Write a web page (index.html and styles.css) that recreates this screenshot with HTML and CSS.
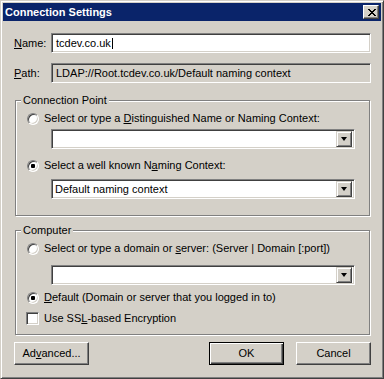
FILE: index.html
```html
<!DOCTYPE html>
<html lang="en">
<head>
    <meta charset="UTF-8">
    <meta name="viewport" content="width=device-width, initial-scale=1.0">
    <title>Connection Settings</title>
    <link rel="stylesheet" href="styles.css">
</head>
<body>
    <div class="window">
        <div class="titlebar">
            <span class="title">Connection Settings</span>
            <div class="close">
                <svg width="8" height="7" viewBox="0 0 8 7" shape-rendering="crispEdges">
                    <path d="M0 0h2v1h-2z M6 0h2v1h-2z M1 1h2v1h-2z M5 1h2v1h-2z M2 2h4v1h-4z M3 3h2v1h-2z M2 4h4v1h-4z M1 5h2v1h-2z M5 5h2v1h-2z M0 6h2v1h-2z M6 6h2v1h-2z" fill="#000"/>
                </svg>
            </div>
        </div>

        <div class="content">
            <div class="row">
                <label class="label"><u>N</u>ame:</label>
                <div class="field edit">tcdev.co.uk<span class="caret"></span></div>
            </div>
            <div class="row path-row">
                <label class="label"><u>P</u>ath:</label>
                <div class="field readonly">LDAP://Root.tcdev.co.uk/Default naming context</div>
            </div>

            <div class="group group-point">
                <div class="group-title">Connection Point</div>
                <div class="option opt-dn">
                    <span class="radio"></span>
                    <span>Select or type a <u>D</u>istinguished Name or Naming Context:</span>
                </div>
                <div class="combo combo-dn">
                    <span class="combo-text"></span>
                    <span class="combo-btn"><span class="arrow"></span></span>
                </div>
                <div class="option opt-known">
                    <span class="radio checked"></span>
                    <span>Select a well known N<u>a</u>ming Context:</span>
                </div>
                <div class="combo combo-known">
                    <span class="combo-text">Default naming context</span>
                    <span class="combo-btn"><span class="arrow"></span></span>
                </div>
            </div>

            <div class="group group-computer">
                <div class="group-title">Computer</div>
                <div class="option opt-server">
                    <span class="radio"></span>
                    <span>Select or type a domain or <u>s</u>erver: (Server | Domain [:port])</span>
                </div>
                <div class="combo combo-server">
                    <span class="combo-text"></span>
                    <span class="combo-btn"><span class="arrow"></span></span>
                </div>
                <div class="option opt-default">
                    <span class="radio checked"></span>
                    <span><u>D</u>efault (Domain or server that you logged in to)</span>
                </div>
                <div class="option opt-ssl">
                    <span class="checkbox"></span>
                    <span>Use SS<u>L</u>-based Encryption</span>
                </div>
            </div>

            <div class="buttons">
                <div class="btn">Ad<u>v</u>anced...</div>
                <div class="btn btn-default btn-ok">OK</div>
                <div class="btn">Cancel</div>
            </div>
        </div>
    </div>
</body>
</html>
```

FILE: styles.css
```css
* {
    margin: 0;
    padding: 0;
    box-sizing: border-box;
}

body {
    font-family: 'Liberation Sans', Arial, sans-serif;
    font-size: 11px;
    line-height: 13px;
    color: #000;
    background: #d4d0c8;
}

u {
    text-decoration: underline;
    text-underline-offset: 1px;
}

/* outer window frame */
.window {
    width: 384px;
    height: 379px;
    background: #d4d0c8;
    border: 1px solid;
    border-color: #d4d0c8 #404040 #404040 #d4d0c8;
    box-shadow: inset 1px 1px #fff, inset -1px -1px #808080;
    padding: 2px;
}

.titlebar {
    height: 18px;
    background: #0a246a;
    display: flex;
    align-items: center;
    justify-content: space-between;
    padding: 0 2px 0 2px;
}

.title {
    color: #fff;
    font-weight: bold;
}

.close {
    width: 16px;
    height: 14px;
    background: #d4d0c8;
    border: 1px solid;
    border-color: #fff #404040 #404040 #fff;
    box-shadow: inset -1px -1px #808080;
    display: flex;
    align-items: center;
    justify-content: center;
    padding-left: 1px;
}

.close svg {
    display: block;
}

.content {
    padding: 12px 10px 0 11px;
}

.row {
    display: flex;
    align-items: center;
    height: 20px;
}

.path-row {
    margin-top: 10px;
}

.label {
    width: 37px;
}

/* sunken 3d field */
.field {
    width: 320px;
    height: 20px;
    display: flex;
    align-items: center;
    padding-left: 4px;
    border: 1px solid;
    border-color: #808080 #fff #fff #808080;
    box-shadow: inset 1px 1px #404040, inset -1px -1px #d4d0c8;
    background: #fff;
    white-space: nowrap;
}

.field.readonly {
    background: #d4d0c8;
}

.caret {
    width: 1px;
    height: 11px;
    background: #000;
    margin-left: 1px;
}

/* etched group box */
.group {
    margin: 0 1px;
    border: 1px solid #808080;
    box-shadow: inset 1px 1px #fff, 1px 1px #fff;
    padding-left: 10px;
}

.group-point {
    margin-top: 17px;
    padding-bottom: 16px;
}

.group-computer {
    margin-top: 14px;
    padding-bottom: 9px;
}

.group-title {
    width: fit-content;
    margin: -7px 0 0 -5px;
    padding: 0 2px;
    background: #d4d0c8;
}

.option {
    display: flex;
    align-items: center;
    height: 13px;
    margin-top: 5px;
}

.opt-known {
    margin-top: 10px;
}

.opt-default {
    margin-top: 6px;
}

.opt-ssl {
    margin-top: 8px;
}

.radio {
    position: relative;
    flex: none;
    width: 12px;
    height: 12px;
    margin: 0 5px 0 1px;
    border-radius: 50%;
    border: 1px solid;
    border-color: #808080 #fff #fff #808080;
    box-shadow: inset 1px 1px #404040, inset -1px -1px #d4d0c8;
    background: #fff;
}

.radio.checked::after {
    content: "";
    position: absolute;
    left: 3px;
    top: 3px;
    width: 4px;
    height: 4px;
    border-radius: 1px;
    background: #000;
}

.checkbox {
    flex: none;
    width: 13px;
    height: 13px;
    margin-right: 5px;
    border: 1px solid;
    border-color: #808080 #fff #fff #808080;
    box-shadow: inset 1px 1px #404040, inset -1px -1px #d4d0c8;
    background: #fff;
}

.combo {
    width: 304px;
    height: 20px;
    margin-left: 25px;
    display: flex;
    align-items: center;
    justify-content: space-between;
    padding: 2px 2px 2px 3px;
    border: 1px solid;
    border-color: #808080 #fff #fff #808080;
    box-shadow: inset 1px 1px #404040, inset -1px -1px #d4d0c8;
    background: #fff;
}

.combo-dn {
    margin-top: 4px;
}

.combo-known {
    margin-top: 7px;
}

.combo-server {
    margin-top: 10px;
}

.combo-btn {
    width: 16px;
    height: 16px;
    background: #d4d0c8;
    border: 1px solid;
    border-color: #d4d0c8 #404040 #404040 #d4d0c8;
    box-shadow: inset 1px 1px #fff, inset -1px -1px #808080;
    display: flex;
    align-items: center;
    justify-content: center;
}

.arrow {
    width: 0;
    height: 0;
    border-left: 3.5px solid transparent;
    border-right: 3.5px solid transparent;
    border-top: 4px solid #000;
}

.buttons {
    display: flex;
    margin-top: 7px;
}

.btn {
    width: 75px;
    height: 23px;
    display: flex;
    align-items: center;
    justify-content: center;
    border: 1px solid;
    border-color: #fff #404040 #404040 #fff;
    box-shadow: inset -1px -1px #808080;
    background: #d4d0c8;
}

.btn-default {
    border-color: #000;
    box-shadow: inset 1px 1px #fff, inset -1px -1px #404040, inset -2px -2px #808080;
}

.btn-ok {
    margin: 0 12px 0 auto;
}
```
